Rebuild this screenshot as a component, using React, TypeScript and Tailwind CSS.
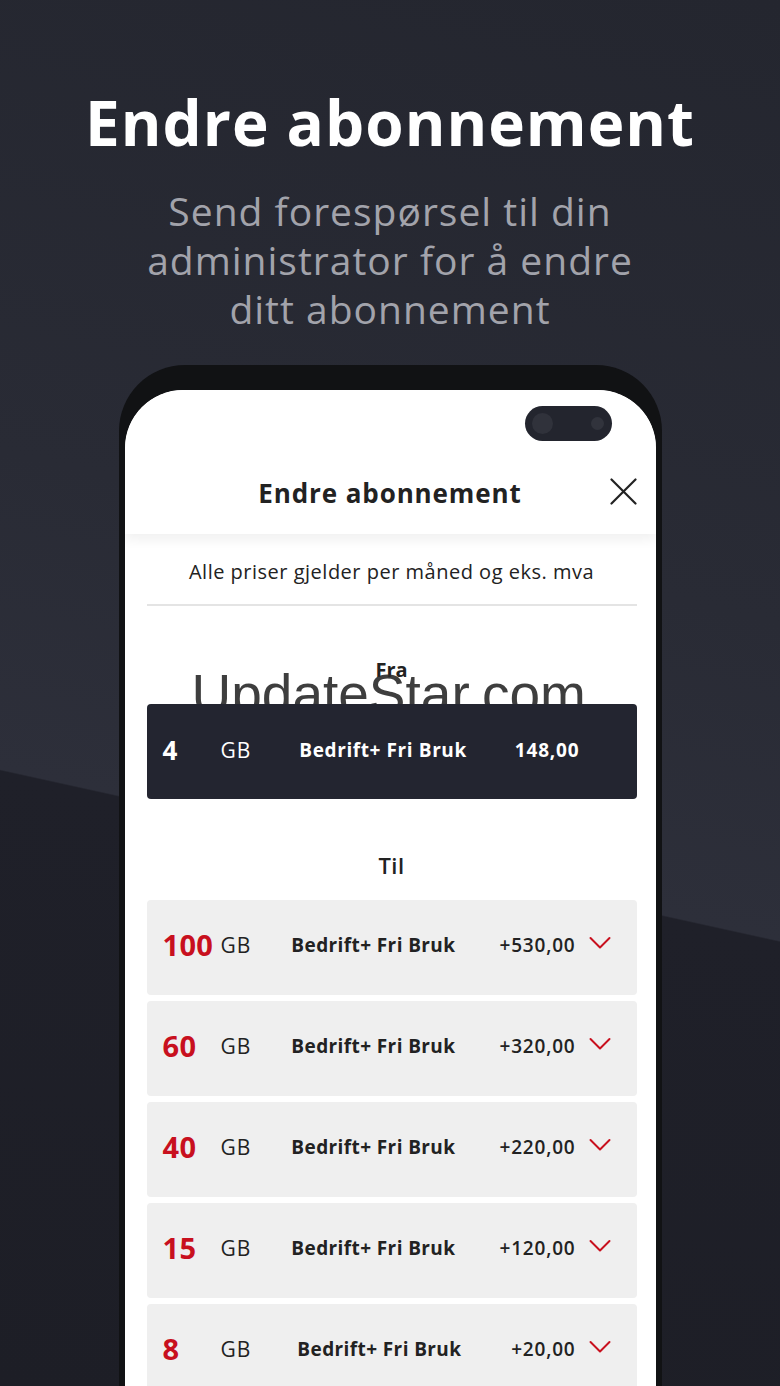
import React from "react";

const rows = [
  { n: "100", price: "+530,00", nameMl: "ml-[40px]" },
  { n: "60", price: "+320,00", nameMl: "ml-[40px]" },
  { n: "40", price: "+220,00", nameMl: "ml-[40px]" },
  { n: "15", price: "+120,00", nameMl: "ml-[40px]" },
  { n: "8", price: "+20,00", nameMl: "ml-[46px]" },
];

function Chevron() {
  return (
    <svg width="22" height="14" viewBox="0 0 22 14" fill="none">
      <path d="M1.5 2 L11 11.5 L20.5 2" stroke="#c8101e" strokeWidth="2" strokeLinecap="round" strokeLinejoin="round" />
    </svg>
  );
}

export default function App() {
  return (
    <div
      className="relative w-[780px] h-[1386px] overflow-hidden bg-[linear-gradient(192.4deg,#24262f_0%,#292b35_40%,#2d2f3a_60.4%,#1f2029_60.5%,#1d1e26_100%)]"
      style={{ fontFamily: "'Open Sans', Lato, sans-serif" }}
    >
      <div className="flex flex-col items-center">
        <h1 className="mt-[80px] text-[62px] leading-[84px] font-bold text-white tracking-[1px]">Endre abonnement</h1>
        <p className="mt-[22px] text-center text-[39px] leading-[49px] text-[#a2a3ab] tracking-[1px]">
          Send forespørsel til din
          <br />
          administrator for å endre
          <br />
          ditt abonnement
        </p>

        {/* phone */}
        <div className="mt-[32px] w-[543px] h-[1100px] rounded-t-[66px] bg-[#111214] pt-[25px] px-[6px]">
          <div className="relative h-full rounded-t-[58px] bg-white overflow-hidden">
            <div className="h-[144px] shadow-[0_6px_12px_rgba(0,0,0,0.06)] relative z-10 bg-white rounded-t-[58px]">
              <div className="flex justify-end pt-[16px] pr-[44px]">
                <div className="flex items-center justify-between w-[87px] h-[35px] rounded-full bg-[#23252e] pl-[7px] pr-[8px]">
                  <div className="w-[21px] h-[21px] rounded-full bg-[#30323b]" />
                  <div className="w-[13px] h-[13px] rounded-full bg-[#31333c]" />
                </div>
              </div>
              <div className="relative flex items-center justify-center mt-[35px] h-[34px]">
                <span className="text-[26px] font-bold text-[#222] tracking-[0.9px]">Endre abonnement</span>
                <svg className="absolute right-[19px] top-[2px]" width="27" height="27" viewBox="0 0 27 27">
                  <path d="M1.5 1.5 L25.5 25.5 M25.5 1.5 L1.5 25.5" stroke="#222" strokeWidth="2.2" strokeLinecap="round" />
                </svg>
              </div>
            </div>

            <div className="pl-[22px] pr-[19px]">
              <div className="h-[72px] border-b-2 border-[#e4e4e4] flex items-center justify-center pt-[6px]">
                <span className="text-[20px] text-[#222] tracking-[0.5px]">Alle priser gjelder per måned og eks. mva</span>
              </div>

              <div className="relative">
                <div className="h-[98px] flex items-start justify-center pt-[52px]">
                  <span className="text-[20px] font-bold text-[#222] leading-[24px]">Fra</span>
                </div>
                <div
                  className="absolute left-[45px] top-[58px] text-[55px] leading-[60px] font-light text-[#2a2a2a] opacity-90 whitespace-nowrap"
                  style={{ fontFamily: "'Liberation Sans', Arial, sans-serif" }}
                >
                  UpdateStar.com
                </div>
                <div className="relative h-[95px] rounded-[4px] bg-[#232530] flex items-start pt-[31px] pl-[16px] text-white">
                  <span className="w-[58px] text-[26px] font-bold leading-[30px]">4</span>
                  <span className="text-[21px] leading-[30px] tracking-[1px]">GB</span>
                  <span className="ml-[48px] text-[19px] font-bold leading-[30px] tracking-[0.6px]">Bedrift+ Fri Bruk</span>
                  <span className="ml-[48px] text-[19px] font-bold leading-[30px] tracking-[0.8px]">148,00</span>
                </div>
              </div>

              <div className="h-[101px] flex items-start justify-center pt-[52px]">
                <span className="text-[22px] font-semibold text-[#222] leading-[28px] tracking-[0.5px]">Til</span>
              </div>

              <div className="flex flex-col gap-[6px]">
                {rows.map((r) => (
                  <div key={r.n} className="h-[95px] rounded-[4px] bg-[#efefef] flex items-start pt-[28px] pl-[16px] pr-[26px]">
                    <span className="w-[58px] text-[29px] font-bold leading-[34px] text-[#c8101e] tracking-[0.3px]">{r.n}</span>
                    <span className="text-[21px] leading-[34px] text-[#222] tracking-[1px]">GB</span>
                    <span className={`${r.nameMl} text-[19px] font-bold leading-[34px] text-[#222] tracking-[0.4px]`}>Bedrift+ Fri Bruk</span>
                    <span className="flex-1 text-right text-[19px] font-semibold leading-[34px] text-[#222] tracking-[0.8px]">{r.price}</span>
                    <span className="ml-[13px] mt-[8px]">
                      <Chevron />
                    </span>
                  </div>
                ))}
              </div>
            </div>
          </div>
        </div>
      </div>
    </div>
  );
}
